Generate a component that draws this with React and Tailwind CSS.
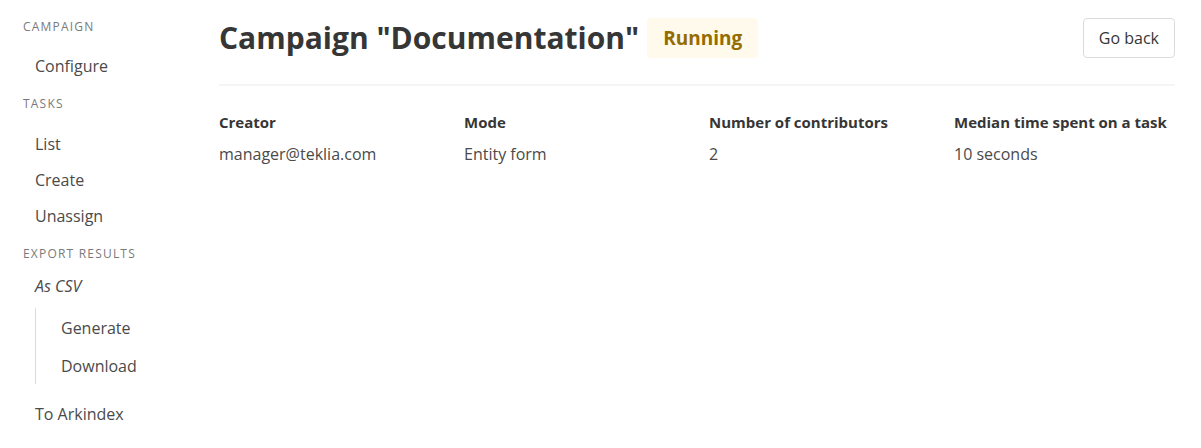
import React from 'react';

const font = { fontFamily: '"Open Sans", "Noto Sans", sans-serif' };

function MenuLabel({ children, className = '' }) {
  return (
    <p className={`h-[15px] text-[12px] leading-[15px] uppercase tracking-[0.1em] text-[#7a7a7a] ${className}`}>
      {children}
    </p>
  );
}

function MenuLink({ children, indent = false }) {
  return (
    <li>
      <a className={`block h-9 py-2 ${indent ? 'pl-[25px]' : 'pl-3'} text-[16px] leading-5 text-[#4a4a4a]`}>{children}</a>
    </li>
  );
}

const stats = [
  { label: 'Creator', value: 'manager@teklia.com' },
  { label: 'Mode', value: 'Entity form' },
  { label: 'Number of contributors', value: '2' },
  { label: 'Median time spent on a task', value: '10 seconds' },
];

export default function App() {
  return (
    <div className="flex w-[1201px] h-[448px] bg-white text-[#4a4a4a] overflow-hidden" style={font}>
      {/* Sidebar menu */}
      <aside className="w-[207px] shrink-0 pl-[23px] pt-[19px]">
        <MenuLabel className="mb-[14px]">Campaign</MenuLabel>
        <ul>
          <MenuLink>Configure</MenuLink>
        </ul>
        <MenuLabel className="mt-3 mb-[15px]">Tasks</MenuLabel>
        <ul>
          <MenuLink>List</MenuLink>
          <MenuLink>Create</MenuLink>
          <MenuLink>Unassign</MenuLink>
        </ul>
        <MenuLabel className="mt-3 mb-[7px]">Export results</MenuLabel>
        <ul>
          <li>
            <span className="block h-9 py-2 pl-3 text-[16px] leading-5 italic">As CSV</span>
            <ul className="mt-1 mb-3 ml-3 border-l border-[#dbdbdb] pt-[2px] flex flex-col gap-[2px]">
              <MenuLink indent>Generate</MenuLink>
              <MenuLink indent>Download</MenuLink>
            </ul>
          </li>
          <MenuLink>To Arkindex</MenuLink>
        </ul>
      </aside>

      {/* Main content */}
      <main className="flex-1 pl-3 pr-[26px] pt-[18px]">
        <div className="flex items-start justify-between">
          <div className="flex items-center gap-2 h-10">
            <h1 className="text-[30px] leading-10 font-bold text-[#363636]">Campaign "Documentation"</h1>
            <span className="h-10 px-4 flex items-center rounded bg-[#fffaeb] text-[#946c00] text-[19px] font-bold">
              Running
            </span>
          </div>
          <button className="h-10 px-[15px] rounded border border-[#dbdbdb] bg-white text-[16px] text-[#363636]">
            Go back
          </button>
        </div>

        <hr className="mt-[26px] h-[2px] border-0 bg-[#f5f5f5]" />

        <div className="grid grid-cols-4 -mx-3 mt-6">
          {stats.map((s) => (
            <div key={s.label} className="px-3">
              <p className="text-[15px] leading-6 font-bold text-[#363636] whitespace-nowrap">{s.label}</p>
              <p className="mt-2 text-[16px] leading-6">{s.value}</p>
            </div>
          ))}
        </div>
      </main>
    </div>
  );
}
